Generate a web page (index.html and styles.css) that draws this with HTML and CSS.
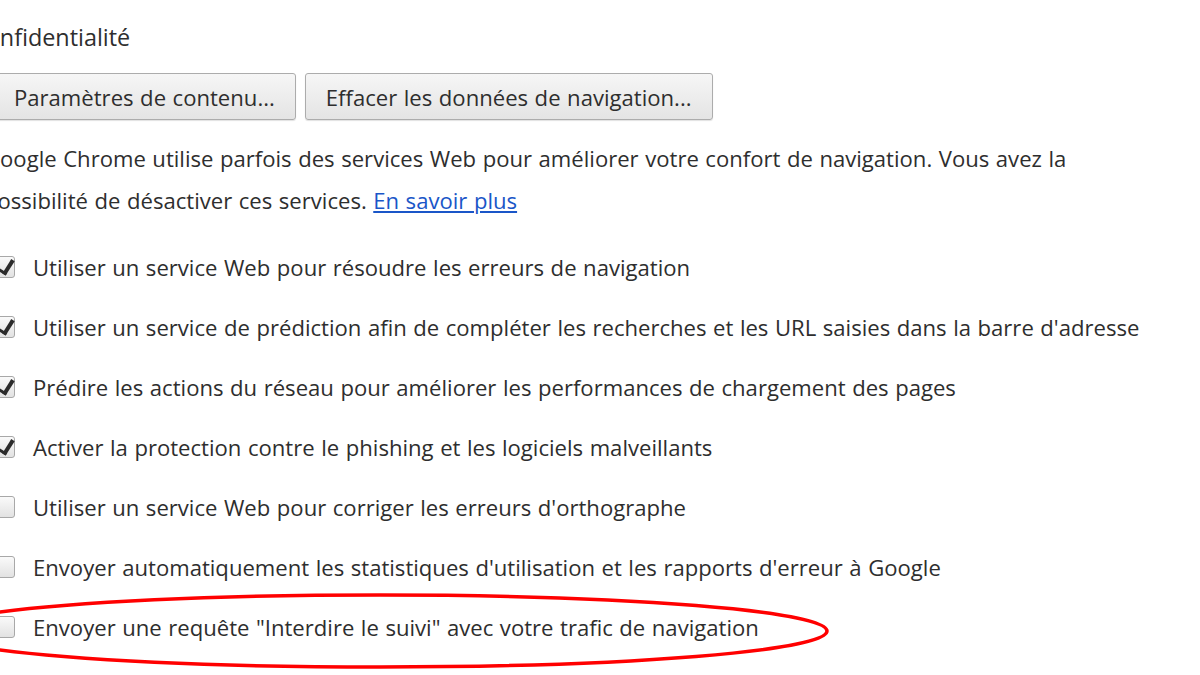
FILE: index.html
```html
<!DOCTYPE html>
<html lang="fr">
<head>
    <meta charset="UTF-8">
    <title>Paramètres - Confidentialité</title>
    <link rel="stylesheet" href="styles.css">
</head>
<body>
    <div class="settings">
        <h3 class="section-title">Confidentialité</h3>
        <div class="section-body">
            <div class="button-row">
                <button class="btn">Paramètres de contenu...</button>
                <button class="btn">Effacer les données de navigation...</button>
            </div>
            <p class="intro">Google Chrome utilise parfois des services Web pour améliorer votre confort de navigation. Vous avez la possibilité de désactiver ces services. <a href="#">En savoir plus</a></p>

            <div class="options">
                <label class="option"><span class="box checked"></span>Utiliser un service Web pour résoudre les erreurs de navigation</label>
                <label class="option"><span class="box checked"></span>Utiliser un service de prédiction afin de compléter les recherches et les URL saisies dans la barre d'adresse</label>
                <label class="option"><span class="box checked"></span>Prédire les actions du réseau pour améliorer les performances de chargement des pages</label>
                <label class="option"><span class="box checked"></span>Activer la protection contre le phishing et les logiciels malveillants</label>
                <label class="option"><span class="box"></span>Utiliser un service Web pour corriger les erreurs d'orthographe</label>
                <label class="option"><span class="box"></span>Envoyer automatiquement les statistiques d'utilisation et les rapports d'erreur à Google</label>
                <label class="option"><span class="box"></span>Envoyer une requête "Interdire le suivi" avec votre trafic de navigation</label>
            </div>
        </div>
    </div>

    <!-- red highlight drawn over the last option -->
    <svg class="highlight" width="1200" height="675" viewBox="0 0 1200 675">
        <ellipse cx="380" cy="631" rx="447" ry="36" fill="none" stroke="#f00" stroke-width="3.5"/>
    </svg>
</body>
</html>
```

FILE: styles.css
```css
* {
    margin: 0;
    padding: 0;
    box-sizing: border-box;
}

body {
    font-family: 'Open Sans', 'Noto Sans', Arial, sans-serif;
    font-size: 22.1px;
    word-spacing: 0.8px;
    color: #2e2e2e;
    background: #fff;
    width: 1200px;
    height: 675px;
    overflow: hidden;
    position: relative;
}

.settings {
    margin-left: -16px;
    padding-top: 16px;
}

.section-title {
    font-size: 23.4px;
    font-weight: normal;
    line-height: 42px;
    margin-left: -13px;
}

.button-row {
    display: flex;
    gap: 9px;
    margin-top: 15px;
    margin-left: 9px;
}

.btn {
    font-family: inherit;
    font-size: 22.1px;
    word-spacing: 0.8px;
    color: #2e2e2e;
    height: 47px;
    padding: 0 20px;
    border: 1px solid #acacac;
    border-radius: 3px;
    background: linear-gradient(#f6f6f6, #e4e4e4);
    box-shadow: 0 1px 1px rgba(0, 0, 0, 0.12);
}

.intro {
    margin-top: 17px;
    line-height: 42px;
    width: 1125px;
}

.intro a {
    color: #1a56c8;
}

.options {
    margin-top: 16px;
}

.option {
    display: flex;
    align-items: center;
    height: 60px;
}

.box {
    width: 22px;
    height: 22px;
    margin-left: 9px;
    margin-right: 18px;
    border: 1px solid #a8a8a8;
    border-radius: 3px;
    background: linear-gradient(#fafafa, #e2e2e2);
    position: relative;
    flex-shrink: 0;
}

.box.checked::after {
    content: "";
    position: absolute;
    left: 6px;
    top: 0;
    width: 7px;
    height: 14px;
    border-right: 4px solid #2b2b2b;
    border-bottom: 3px solid #2b2b2b;
    transform: rotate(32deg);
}

.highlight {
    position: absolute;
    left: 0;
    top: 0;
    pointer-events: none;
}
```
